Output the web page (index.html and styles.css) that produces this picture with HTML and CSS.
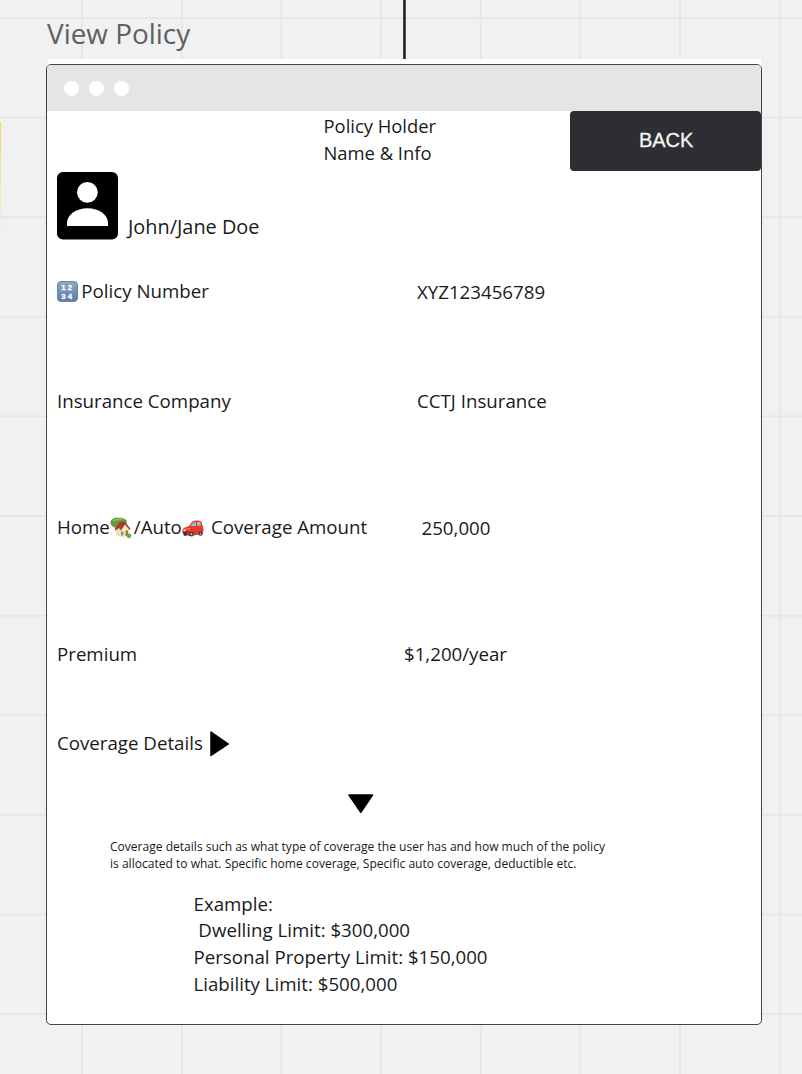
FILE: index.html
```html
<!DOCTYPE html>
<html lang="en">
<head>
<meta charset="utf-8">
<title>View Policy</title>
<link rel="stylesheet" href="styles.css">
</head>
<body>
<svg class="grid" width="802" height="1074" aria-hidden="true">
  <defs>
    <pattern id="cells" x="81.2" y="16.9" width="99.63" height="99.63" patternUnits="userSpaceOnUse">
      <path d="M1 0V99.63M0 1H99.63" stroke="#e6e6e6" stroke-width="2" fill="none"/>
    </pattern>
    <linearGradient id="note" x1="0" y1="0" x2="0" y2="1"><stop offset="0" stop-color="#f5d75f"/><stop offset="1" stop-color="#f1efe4"/></linearGradient>
  </defs>
  <rect width="802" height="1074" fill="url(#cells)"/>
  <rect x="0" y="122" width="1" height="110" fill="url(#note)"/>
  <rect x="403.2" y="0" width="2.5" height="59" fill="#1a1a1a"/>
  <rect x="48" y="59" width="713" height="12" fill="#fff"/>
</svg>
<main class="board">
  <h1 class="frame-title">View Policy</h1>
  <section class="window">
    <header class="bar"><i class="dot"></i><i class="dot"></i><i class="dot"></i></header>
    <div class="top">
      <p class="heading">Policy Holder<br>Name &amp; Info</p>
      <button class="back">BACK</button>
    </div>
    <div class="person">
      <svg class="avatar" width="61" height="68" viewBox="0 0 61 68"><rect width="61" height="67.500" rx="6"/><circle cx="30.4" cy="20.3" r="10.4" fill="#fff"/><path d="M10 54V51C10 43 19 36.300 30.500 36.300S51 43 51 51V54Z" fill="#fff"/></svg>
      <span class="name">John/Jane Doe</span>
    </div>
    <div class="row number">
      <span class="label"><svg class="digits" width="21" height="21" viewBox="0 0 21 21"><defs><linearGradient id="blue" x1="0" y1="0" x2="0" y2="1"><stop offset="0" stop-color="#91a9c4"/><stop offset="1" stop-color="#577ba7"/></linearGradient></defs><rect x=".5" y=".5" width="20" height="20" rx="3.500" fill="url(#blue)" stroke="#6b87aa"/><g class="digit-text"><text x="4.300" y="8.900">12</text><text x="4.300" y="17.900">34</text></g></svg>Policy Number</span>
      <span class="value">XYZ123456789</span>
    </div>
    <div class="row company"><span class="label">Insurance Company</span><span class="value">CCTJ Insurance</span></div>
    <div class="row amount">
      <span class="label">Home<svg class="house" width="22" height="22" viewBox="0 0 22 22"><path d="M6 8H8.500V17H6Z" fill="#936a37"/><path d="M.5 6C0 2.500 4 .5 8 .8C12 .3 17 2 17 5C16 9 12 8 10 9.500C7 12 1 10.500 .5 6Z" fill="#689b3b"/><path d="M3 4.500C5 2 9 3 12 2" stroke="#8fbb58" stroke-width="1.500" fill="none"/><path d="M6 12L10 8L14 13V20.500L6 18.500Z" fill="#f3dfab"/><path d="M10.500 12L15 7L19.500 12.500V19L12 20.500Z" fill="#fbebbd"/><path d="M4.500 12.500L9.500 5L15 4.500L20.500 12L19.500 13L15 7.500L11 13.500L9 11L5.500 13.500Z" fill="#a63c32"/><path d="M11 14.500H13.500V18.500H11Z" fill="#6d9dbb"/><path d="M15.500 13.500H18V19H15.500Z" fill="#a9713f"/><circle cx="19" cy="18.800" r="2.400" fill="#72a745"/></svg><span class="auto">/Auto</span><svg class="car" width="22" height="17" viewBox="0 0 22 17"><path d="M1 9C2 7 5 7 7 6L10 2C12 0 18 0 19.500 2L21 7C22 9 21.500 12 20.500 14L7 16L1.500 14C0 13 0 11 1 9Z" fill="#e63a2e"/><path d="M8.500 6L11.200 2.600L14 2V6ZM15.200 2H18L19 5.500L15.200 6Z" fill="#8fc5dc"/><path d="M2 9.500L8 8.500" stroke="#ff8b74"/><path d="M1 12H7" stroke="#922018" stroke-width="1.500"/><circle cx="3.200" cy="14" r="1.900" fill="#30363b"/><circle cx="9.500" cy="14.200" r="2.400" fill="#30363b"/><circle cx="18.500" cy="13.600" r="2.200" fill="#30363b"/><circle cx="9.500" cy="14.200" r="1.100" fill="#b9c1c4"/><circle cx="18.500" cy="13.600" r=".9" fill="#b9c1c4"/><circle cx="2.500" cy="10.500" r="1" fill="#ffe2a0"/></svg><span class="coverage">Coverage Amount</span></span>
      <span class="value">250,000</span>
    </div>
    <div class="row premium"><span class="label">Premium</span><span class="value">$1,200/year</span></div>
    <div class="row details"><span class="label">Coverage Details</span><svg class="right" width="20" height="26" viewBox="0 0 20 26"><path d="M1 1L18.300 13L1 24.500Z" stroke="#000" stroke-width="1.500" stroke-linejoin="round"/></svg></div>
    <svg class="down" width="26" height="20" viewBox="0 0 26 20"><path d="M1 1H24.500L12.800 18.300Z" stroke="#000" stroke-width="1.500" stroke-linejoin="round"/></svg>
    <p class="note">Coverage details such as what type of coverage the user has and how much of the policy<br>is allocated to what. Specific home coverage, Specific auto coverage, deductible etc.</p>
    <p class="example">Example:<br>&nbsp;Dwelling Limit: $300,000<br>Personal Property Limit: $150,000<br>Liability Limit: $500,000</p>
  </section>
</main>
</body>
</html>
```
FILE: styles.css
```css
* { box-sizing: border-box; }
body { margin: 0; width: 802px; height: 1074px; overflow: hidden; background: #f1f1f1; color: #1a1a1a; font-family: "Open Sans", "Noto Sans", sans-serif; font-size: 18.7px; line-height: 26.7px; }
p, h1 { margin: 0; font-weight: 400; }
svg { flex: none; display: block; }
.grid { position: absolute; left: 0; top: 0; z-index: -1; }
.board { padding: 14px 40px 0 46px; }
.frame-title { height: 50px; padding-left: 1px; color: #606060; font-size: 27.9px; line-height: 38px; white-space: nowrap; }
.window { width: 716.400px; height: 960.500px; border: 1.500px solid #444; border-radius: 5px; background: #fff; white-space: nowrap; overflow: hidden; }
.bar { display: flex; align-items: center; gap: 10px; height: 46px; padding-left: 17.300px; background: #e5e5e5; }
.dot { width: 15px; height: 15px; border-radius: 50%; background: #fff; }
.top { display: flex; justify-content: space-between; height: 61px; padding-left: 276.500px; }
.heading { padding-top: 2px; font-size: 18.4px; line-height: 26.5px; }
.back { width: 191.500px; height: 60px; padding: 0 0 1px 1px; border: 0; border-radius: 4px; background: #2d2e33; color: #f4f4f4; font: 20px/57px "Liberation Sans", Arial, sans-serif; -webkit-text-stroke: .3px #f4f4f4; }
.person { display: flex; height: 106px; padding-left: 10px; gap: 10px; }
.name { padding-top: 42px; font-size: 19.9px; }
.row { display: grid; grid-template-columns: 360px 1fr; padding-left: 10px; }
.label { display: flex; }
.number { height: 110px; }
.number .value { padding-top: 1px; }
.digits { margin: 3px 3.300px 0 0; }
.digit-text { fill: #fff; font: bold 7.8px "Liberation Sans", sans-serif; letter-spacing: 2.200px; stroke: #fff; stroke-width: .3px; }
.company { height: 126px; }
.amount { height: 127px; grid-template-columns: 364.500px 1fr; }
.amount .value { padding-top: 1px; }
.house { margin: 3px 2px 0 0; }
.car { margin-top: 6px; }
.coverage { margin-left: 7px; }
.premium { height: 89px; grid-template-columns: 347px 1fr; }
.details { display: flex; gap: 7px; height: 64px; }
.right { margin-top: 1px; }
.down { margin-left: 301px; }
.note { margin: 23.500px 0 0 63px; font-size: 12.05px; line-height: 17.3px; }
.example { margin: 18.500px 0 0 146.500px; }
```
